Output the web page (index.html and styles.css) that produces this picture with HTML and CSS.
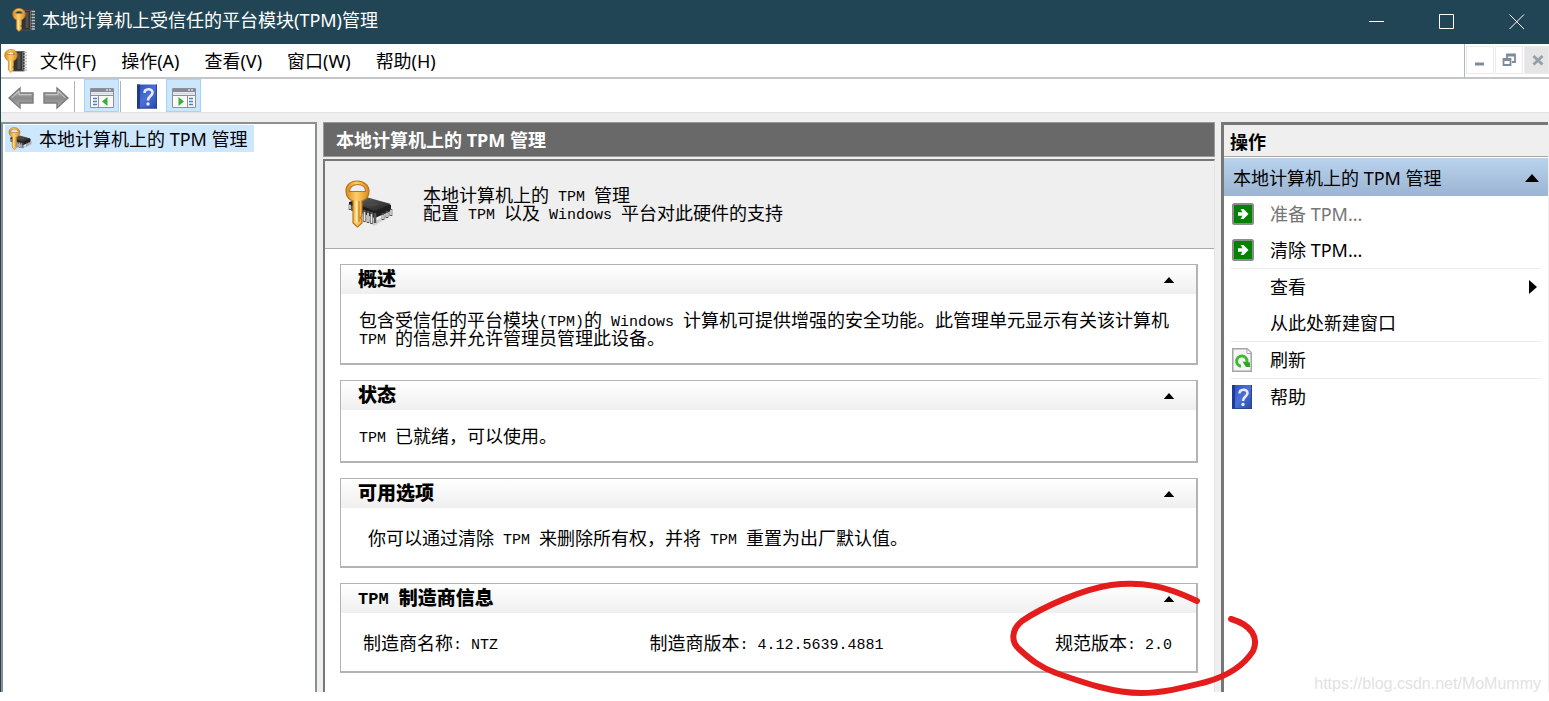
FILE: index.html
```
<!DOCTYPE html>
<html lang="zh-CN">
<head>
<meta charset="utf-8">
<title>本地计算机上受信任的平台模块(TPM)管理</title>
<link rel="stylesheet" href="styles.css">
</head>
<body>
<svg class="defs" aria-hidden="true">
  <defs>
    <linearGradient id="gold" x1="0" x2="1" y1="0" y2="0"><stop offset="0" stop-color="#d98a1c"/><stop offset=".45" stop-color="#ffcf6a"/><stop offset="1" stop-color="#d8891d"/></linearGradient>
    <linearGradient id="chip" x1="0" x2="1" y1="0" y2="1"><stop offset="0" stop-color="#666"/><stop offset="1" stop-color="#222"/></linearGradient>
    <linearGradient id="arrow" x1="0" x2="0" y1="0" y2="1"><stop offset="0" stop-color="#bcbcbc"/><stop offset=".5" stop-color="#8a8a8a"/><stop offset="1" stop-color="#b0b0b0"/></linearGradient>
    <linearGradient id="book" x1="0" x2="1" y1="0" y2="1"><stop offset="0" stop-color="#2d50b8"/><stop offset=".5" stop-color="#4a70d8"/><stop offset="1" stop-color="#2548a8"/></linearGradient>
  </defs>
  <symbol id="i-app" viewBox="0 0 24 24">
    <path d="M10 2.500h10.500v19.500H9z" fill="#333" stroke="#555" stroke-width=".8"/><path d="M13.500 4h3v16h-3z" fill="#505050"/><path d="M18.500 3v18" stroke="#777" stroke-width=".8"/>
    <path d="M19.500 3.500H23M19.500 6.500H23M19.500 9.500H23M19.500 12.500H23M19.500 15.500H23M19.500 18.500H23M19.500 21H23" stroke="#bdbdbd" stroke-width="1.300"/>
    <path fill-rule="evenodd" d="M7 .5C3 .5.7 3 .7 6.300c0 2.500 1.500 4.700 3.700 5.500V21L7 23.500 9.500 21v-1.500L8.700 18l.8-1.500V11.800c2.200-.8 3.800-3 3.800-5.500C13.300 3 11 .5 7 .5zM3.500 5.500C4 3.800 5.300 3 7 3s3.200.8 3.500 2.500z" fill="url(#gold)" stroke="#c07d1c" stroke-width=".7"/>
    <path d="M6.500 12v9" stroke="#fff0b5" stroke-width="1"/>
  </symbol>
  <symbol id="i-tpm" viewBox="0 0 50 50">
    <path d="M8 30l22 16 18-11v-4L30 42z" fill="#aaa" opacity=".45"/>
    <path d="M5 22l17-4 25 7v6L31 38 5 29z" fill="#1f1f1f"/>
    <path d="M6 21l16-4 25 7-16 7z" fill="url(#chip)"/>
    <path d="M6 24v6M8.500 26v5M17 30v10M20.500 30v12M24 31v12M27.500 32v12M31 33v10M47 29v7M43 31v7M39 33v7" stroke="#555" stroke-width="2.600"/>
    <path d="M6 25v4M17 31v8M20.500 32v9M24 33v9M27.500 34v9M47 30v5M43 33v4M39 35v4" stroke="#e4e4e4" stroke-width="1.500"/>
    <ellipse cx="28" cy="24" rx="6" ry="2" fill="#494949"/>
    <path fill-rule="evenodd" d="M13 1C6 1 2 5.500 2 11c0 5 3 8.500 7 10v22l4.500 4 4.500-4v-3l-1.500-2 1.500-2.500V21c4-1.500 7-5 7-10C25 5.500 20 1 13 1zM5.500 11.500C5.500 7 9 4.500 13.500 4.500S21.500 7 21.500 11.500z" fill="url(#gold)" stroke="#b8751a" stroke-width="1.200"/>
    <path d="M12.500 21v21" stroke="#fff0b5" stroke-width="1.500"/><path d="M15 21v21" stroke="#b87414" stroke-width="1"/>
  </symbol>
  <symbol id="i-back" viewBox="0 0 26 24">
    <path d="M1 12L12 2v5h13v10H12v5z" fill="url(#arrow)" stroke="#7c7c7c" stroke-width="1.400"/>
    <path d="M3.500 12l7.500-7V8.700h12.500" fill="none" stroke="#d4d4d4"/>
  </symbol>
  <symbol id="i-help" viewBox="0 0 20 24">
    <path d="M0 0h20v24H0z" fill="url(#book)"/><path d="M0 0h3v24H0z" fill="#1f3a94"/><path d="M19.500 0v24M0 23.500h20" stroke="#2c4587"/>
    <path d="M7.500 8.500C7.500 3.500 15.500 3.500 15.500 8c0 3.500-4.500 3.500-4.500 8" fill="none" stroke="#e8ebf5" stroke-width="2.600"/><circle cx="11" cy="19.500" r="1.700" fill="#e8ebf5"/>
  </symbol>
  <symbol id="i-pane" viewBox="0 0 24 20">
    <path d="M.5.500h23v19H.5z" fill="#fafafa" stroke="#8b919b"/><path d="M1 1h22v3H1z" fill="#848b97"/><path d="M16 2h2M19 2h2" stroke="#fff"/>
    <path d="M1 5.500h22" stroke="#d7dae0" stroke-width="2"/><path d="M1 7.500h22M8.500 8v11" stroke="#8b919b"/>
    <path d="M3 10.500h4M3 13.500h4M3 16.500h4" stroke="#4f7fc0" stroke-width="1.500"/><path d="M17.500 9v9l-5.500-4.500z" fill="#38b22c"/>
  </symbol>
  <symbol id="i-pane-right" viewBox="0 0 24 20">
    <path d="M.5.500h23v19H.5z" fill="#fafafa" stroke="#8b919b"/><path d="M1 1h22v3H1z" fill="#848b97"/><path d="M16 2h2M19 2h2" stroke="#fff"/>
    <path d="M1 5.500h22" stroke="#d7dae0" stroke-width="2"/><path d="M1 7.500h22M15.500 8v11" stroke="#8b919b"/>
    <path d="M17 10.500h4M17 13.500h4M17 16.500h4" stroke="#4f7fc0" stroke-width="1.500"/><path d="M6.500 9v9l5.500-4.500z" fill="#38b22c"/>
  </symbol>
  <symbol id="i-go" viewBox="0 0 22 22">
    <rect x="1" y="1" width="20" height="20" rx="1.500" fill="#048204" stroke="#8c8c8c" stroke-width="2"/>
    <path d="M6 9.300h4.500L8.500 6h3l5 5-5 5h-3l2-3.300H6z" fill="#fff"/>
  </symbol>
  <symbol id="i-refresh" viewBox="0 0 20 24">
    <path d="M.75.750h14.500l4 4v18.500H.75z" fill="#f5f5f5" stroke="#a5a5a5" stroke-width="1.500"/><path d="M15 1v4.500h4" fill="#fff" stroke="#a5a5a5"/>
    <path d="M9 18.300A5.200 5.200 0 1 1 15 13v2" fill="none" stroke="#3dba32" stroke-width="3"/><path d="M10.500 13.500l7.500 1V19h-4z" fill="#2ea524"/>
  </symbol>
  <symbol id="i-up" viewBox="0 0 14 8"><path d="M7 0l7 8H0z"/></symbol>
</svg>

<header class="titlebar">
  <svg class="app-icon"><use href="#i-app"/></svg>
  <h1>本地计算机上受信任的平台模块(TPM)管理</h1>
  <div class="window-buttons">
    <button aria-label="最小化"><svg viewBox="0 0 16 16"><path d="M0 7.500h15"/></svg></button>
    <button aria-label="最大化"><svg viewBox="0 0 16 16"><path d="M.5.500h14v14H.5z"/></svg></button>
    <button aria-label="关闭"><svg viewBox="0 0 16 16"><path d="M.5.500l14.500 14.500M15 .5L.5 15"/></svg></button>
  </div>
</header>

<div class="frame">
  <div class="menubar">
    <nav class="menus">
      <svg class="app-icon"><use href="#i-app"/></svg>
      <button>文件(F)</button><button>操作(A)</button><button>查看(V)</button><button>窗口(W)</button><button>帮助(H)</button>
    </nav>
    <div class="child-buttons">
      <button aria-label="最小化子窗口"><svg viewBox="0 0 14 14"><path d="M2 11h9" stroke-width="3"/></svg></button>
      <button aria-label="还原子窗口"><svg viewBox="0 0 14 14"><path d="M5 5V1.500h8V9h-3M5 2.500h8" stroke-width="1.800"/><path d="M1.500 6h7v6h-7zM1 7h8" stroke-width="1.800"/></svg></button>
      <button class="dim" aria-label="关闭子窗口"><svg viewBox="0 0 14 14"><path d="M2.500 3l9 8.500M11.500 3l-9 8.500" stroke-width="3"/></svg></button>
    </div>
  </div>

  <div class="toolbar">
    <button aria-label="后退"><svg class="nav-arrow"><use href="#i-back"/></svg></button>
    <button aria-label="前进"><svg class="nav-arrow forward"><use href="#i-back"/></svg></button>
    <span class="divider"></span>
    <button class="pressed" aria-label="显示/隐藏控制台树"><svg class="pane-icon"><use href="#i-pane"/></svg></button>
    <span class="divider tight"></span>
    <button class="wide" aria-label="帮助"><svg class="help-icon"><use href="#i-help"/></svg></button>
    <button class="pressed" aria-label="显示/隐藏操作窗格"><svg class="pane-icon"><use href="#i-pane-right"/></svg></button>
  </div>

  <main class="workspace">
    <aside class="tree">
      <button class="tree-node"><svg class="tree-icon"><use href="#i-tpm"/></svg><span>本地计算机上的 TPM 管理</span></button>
    </aside>

    <section class="center">
      <h2 class="center-title">本地计算机上的 TPM 管理</h2>
      <div class="details">
        <div class="intro">
          <svg class="intro-icon"><use href="#i-tpm"/></svg>
          <p>本地计算机上的<span class="half"> TPM </span>管理<br>配置<span class="half"> TPM </span>以及<span class="half"> Windows </span>平台对此硬件的支持</p>
        </div>
        <div class="cards">
          <article class="card">
            <header><h3>概述</h3><button aria-label="折叠概述"><svg><use href="#i-up"/></svg></button></header>
            <div class="card-body"><p>包含受信任的平台模块<span class="half">(TPM)</span>的<span class="half"> Windows </span>计算机可提供增强的安全功能。此管理单元显示有关该计算机<span class="half"> TPM </span>的信息并允许管理员管理此设备。</p></div>
          </article>
          <article class="card">
            <header><h3>状态</h3><button aria-label="折叠状态"><svg><use href="#i-up"/></svg></button></header>
            <div class="card-body"><p><span class="half">TPM </span>已就绪，可以使用。</p></div>
          </article>
          <article class="card roomy">
            <header><h3>可用选项</h3><button aria-label="折叠可用选项"><svg><use href="#i-up"/></svg></button></header>
            <div class="card-body"><p>你可以通过清除<span class="half"> TPM </span>来删除所有权，并将<span class="half"> TPM </span>重置为出厂默认值。</p></div>
          </article>
          <article class="card roomy">
            <header><h3><span class="half">TPM </span>制造商信息</h3><button aria-label="折叠制造商信息"><svg><use href="#i-up"/></svg></button></header>
            <div class="card-body facts">
              <p>制造商名称<span class="half">: NTZ</span></p>
              <p>制造商版本<span class="half">: 4.12.5639.4881</span></p>
              <p>规范版本<span class="half">: 2.0</span></p>
            </div>
          </article>
        </div>
      </div>
    </section>

    <aside class="actions">
      <h2>操作</h2>
      <button class="group"><span>本地计算机上的 TPM 管理</span><svg><use href="#i-up"/></svg></button>
      <ul>
        <li><button disabled><svg class="go"><use href="#i-go"/></svg><span>准备 TPM...</span></button></li>
        <li><button><svg class="go"><use href="#i-go"/></svg><span>清除 TPM...</span></button></li>
        <li class="split"><button><i></i><span>查看</span><svg class="submenu" viewBox="0 0 8 14"><path d="M0 0l8 7-8 7z"/></svg></button></li>
        <li><button><i></i><span>从此处新建窗口</span></button></li>
        <li class="split"><button><svg class="page"><use href="#i-refresh"/></svg><span>刷新</span></button></li>
        <li class="split"><button><svg class="page"><use href="#i-help"/></svg><span>帮助</span></button></li>
      </ul>
    </aside>
  </main>
</div>

<svg class="ink" viewBox="1008 578 254 120" aria-hidden="true"><path d="M1197 601C1166 586 1142 581 1111 585C1084 589 1044 606 1022 621C1011 630 1011 642 1019 649C1031 660 1040 667 1056 673C1082 682 1112 693 1141 693C1164 693 1186 687 1206 682C1227 676 1243 667 1253 651C1259 638 1252 625 1231 619"/></svg>
<span class="watermark">https://blog.csdn.net/MoMummy</span>
</body>
</html>
```
FILE: styles.css
```
* { box-sizing: border-box; }

body {
  position: relative;
  display: flex;
  flex-direction: column;
  min-height: 100vh;
  margin: 0;
  padding-bottom: 10px;
  background: #fff;
  color: #000;
  font: 18px/24px "Noto Sans", "Noto Sans CJK SC", sans-serif;
}

h1, h2, h3, p, ul { margin: 0; padding: 0; font-size: inherit; }
ul { list-style: none; }
svg { display: block; flex: none; }
.defs { position: absolute; width: 0; height: 0; }

button {
  margin: 0;
  padding: 0;
  border: 0;
  background: none;
  color: inherit;
  font: inherit;
  text-align: left;
}

.app-icon { width: 24px; height: 24px; }

/* Title bar */
.titlebar {
  display: flex;
  align-items: center;
  height: 44px;
  padding-left: 12px;
  background: #214555;
  color: #fff;
}
.titlebar .app-icon { margin-bottom: 4px; }
.titlebar h1 { margin: 0 auto 4px 6px; font-weight: 400; }
.window-buttons { display: flex; }
.window-buttons button { display: grid; place-items: center; width: 70px; height: 42px; }
.window-buttons button:last-child { width: 67px; padding-left: 3px; }
.window-buttons svg { width: 16px; height: 16px; fill: none; stroke: #fff; }

.frame {
  display: flex;
  flex: 1;
  flex-direction: column;
  border-left: 1px solid #214555;
  background: #efefef;
}

/* Menu bar */
.menubar { display: flex; height: 35px; background: #fff; }
.menus {
  display: flex;
  flex: 1;
  align-items: center;
  gap: 25px;
  padding-left: 3px;
  border-right: 1px solid #b4b7ba;
  border-bottom: 2px solid #c3c5c8;
}
.menus .app-icon { margin-right: -13px; }
.child-buttons {
  display: flex;
  gap: 1px;
  padding: 2px 0 0 1px;
  border-bottom: 2px solid #c3c5c8;
}
.child-buttons button {
  display: grid;
  place-items: center;
  width: 28px;
  height: 28px;
  border: 1px solid #ececec;
}
.child-buttons .dim { width: 25px; padding-left: 3px; background: #e5e5e5; }
.child-buttons svg { width: 14px; height: 14px; fill: none; stroke: #7d8b9a; }
.child-buttons .dim svg { stroke: #94a0ac; }

/* Toolbar */
.toolbar {
  display: flex;
  height: 34px;
  padding-left: 2px;
  border-bottom: 1px solid #e3e3e3;
  background: #fff;
}
.toolbar button { display: grid; place-items: center; width: 35px; padding-top: 4px; }
.toolbar .wide { width: 45px; padding: 2px 0 0 6px; }
.toolbar .pressed { border: 1px solid #a3d5fb; background: #cce6fb; }
.divider { width: 1px; margin: 2px 9px 0 1px; background: #b4b4b4; }
.divider.tight { margin: 2px 0 0 1px; }
.nav-arrow { width: 26px; height: 24px; }
.forward { transform: scaleX(-1); }
.pane-icon { width: 24px; height: 20px; }
.help-icon { width: 20px; height: 25px; }

/* Three panes */
.workspace {
  display: grid;
  flex: 1;
  grid-template-columns: 316px 1fr 327px;
  gap: 6px;
  padding: 9px 1px 0 0;
}
.tree {
  padding: 1px 2px;
  border: 2px solid #8b9097;
  border-bottom: 0;
  background: #fff;
}
.tree-node {
  display: flex;
  align-items: center;
  gap: 7px;
  height: 27px;
  padding: 0 6px 0 3px;
  background: #cde7ff;
}
.tree-icon { width: 24px; height: 24px; }

.center { display: flex; flex-direction: column; gap: 2px; }
.center-title {
  height: 35px;
  padding: 5px 12px;
  border: 1px solid #9a9a9a;
  background: #696969;
  color: #fff;
  font-weight: 700;
}
.details {
  flex: 1;
  border-top: 2px solid #777;
  border-left: 2px solid #777;
  border-right: 1px solid #e3e3e3;
  background: #fff;
  font: 18px/18px "Noto Sans CJK SC", sans-serif;
}
/* Latin letters take half the width of a Chinese character */
.half {
  font-family: "Liberation Mono", monospace;
  font-size: 15px;
  line-height: 0;
  vertical-align: 1px;
}
.intro {
  display: flex;
  align-items: center;
  gap: 29px;
  height: 88px;
  padding-left: 19px;
  border-bottom: 1px solid #ababab;
  background: #efefef;
}
.intro p { padding-bottom: 3px; }
.intro-icon { width: 50px; height: 50px; }

.cards { display: flex; flex-direction: column; gap: 15px; padding: 15px 16px 19px 15px; }
.card { border: 1px solid #b3b3b3; border-right-width: 2px; border-bottom-width: 2px; }
.card header {
  display: flex;
  align-items: center;
  justify-content: space-between;
  height: 29px;
  padding: 0 21px 0 17px;
  background: linear-gradient(#fff, #efefef);
}
.card h3 { padding-bottom: 3px; font-size: 19px; font-weight: 900; }
.card h3 .half { font-size: 17px; }
.card header svg { width: 12px; height: 6px; }
.card-body { padding: 16px 20px 17px 18px; }
.roomy .card-body { padding: 20px 24px 20px 27px; }
.roomy .facts {
  display: grid;
  grid-template-columns: 287fr 406fr 117fr;
  padding-left: 22px;
  white-space: nowrap;
}

/* Actions pane */
.actions {
  border-top: 3px solid #777;
  border-left: 3px solid #777;
  background: #fff;
}
.actions h2 {
  height: 32px;
  padding: 5px 6px;
  border-bottom: 1px solid #a5a5a5;
  background: #efefef;
  font-weight: 700;
}
.group {
  display: flex;
  align-items: center;
  justify-content: space-between;
  width: 100%;
  height: 38px;
  margin-top: 1px;
  padding: 2px 9px 0;
  background: linear-gradient(#bad3ed, #9ab4d2);
}
.group svg { width: 14px; height: 8px; }
.actions ul { padding: 0 7px 0 7px; }
.actions li button {
  display: grid;
  grid-template-columns: 22px 1fr auto;
  gap: 16px;
  align-items: center;
  width: 100%;
  height: 36px;
  padding: 0 4px 0 1px;
}
.actions li button:disabled { color: #757575; }
.split { border-top: 1px solid #ececec; }
.go { width: 22px; height: 22px; }
.page { width: 20px; height: 24px; }
.submenu { width: 8px; height: 14px; }

/* Hand-drawn mark and watermark over the panes */
.ink {
  position: absolute;
  top: 578px;
  right: 287px;
  width: 254px;
  height: 120px;
  fill: none;
  stroke: #e51c1c;
  stroke-width: 6;
  stroke-linecap: round;
  stroke-linejoin: round;
  pointer-events: none;
}
.watermark {
  position: absolute;
  right: 8px;
  bottom: 6px;
  color: #e2e2e2;
  font: 16px/24px "Liberation Sans", sans-serif;
}
```
